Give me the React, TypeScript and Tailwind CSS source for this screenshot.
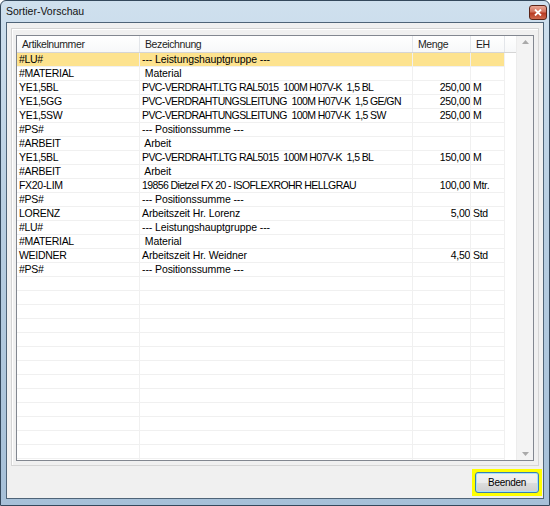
import React from "react";

type Row = { nr: string; bez: string; menge?: string; eh?: string; hl?: boolean; caps?: boolean };

const rows: Row[] = [
  { nr: "#LU#", bez: "--- Leistungshauptgruppe ---", hl: true },
  { nr: "#MATERIAL", bez: " Material" },
  { nr: "YE1,5BL", bez: "PVC-VERDRAHT.LTG RAL5015  100M H07V-K  1,5 BL", menge: "250,00", eh: "M", caps: true },
  { nr: "YE1,5GG", bez: "PVC-VERDRAHTUNGSLEITUNG  100M H07V-K  1,5 GE/GN", menge: "250,00", eh: "M", caps: true },
  { nr: "YE1,5SW", bez: "PVC-VERDRAHTUNGSLEITUNG  100M H07V-K  1,5 SW", menge: "250,00", eh: "M", caps: true },
  { nr: "#PS#", bez: "--- Positionssumme ---" },
  { nr: "#ARBEIT", bez: " Arbeit" },
  { nr: "YE1,5BL", bez: "PVC-VERDRAHT.LTG RAL5015  100M H07V-K  1,5 BL", menge: "150,00", eh: "M", caps: true },
  { nr: "#ARBEIT", bez: " Arbeit" },
  { nr: "FX20-LIM", bez: "19856 Dietzel FX 20 - ISOFLEXROHR HELLGRAU", menge: "100,00", eh: "Mtr.", caps: true },
  { nr: "#PS#", bez: "--- Positionssumme ---" },
  { nr: "LORENZ", bez: "Arbeitszeit Hr. Lorenz", menge: "5,00", eh: "Std" },
  { nr: "#LU#", bez: "--- Leistungshauptgruppe ---" },
  { nr: "#MATERIAL", bez: " Material" },
  { nr: "WEIDNER", bez: "Arbeitszeit Hr. Weidner", menge: "4,50", eh: "Std" },
  { nr: "#PS#", bez: "--- Positionssumme ---" },
];

const emptyRows = Array.from({ length: 14 }, () => ({ nr: "", bez: "" } as Row));

function ListRow({ r }: { r: Row }) {
  const bg = r.hl ? "bg-[#fde38f]" : "bg-white";
  return (
    <div className={`flex self-start h-[14px] shrink-0 ${bg}`}>
      <div className="w-[123px] shrink-0 border-r border-b border-[#f0f0f0] pl-[2px] leading-[13px] tracking-[-0.3px] whitespace-pre overflow-hidden">
        {r.nr}
      </div>
      <div
        className={`w-[273px] shrink-0 border-r border-b border-[#f0f0f0] pl-[2px] leading-[13px] whitespace-pre overflow-hidden ${
          r.caps ? "tracking-[-0.6px]" : "tracking-[-0.1px]"
        }`}
      >
        {r.bez}
      </div>
      <div className="w-[58px] shrink-0 border-r border-b border-[#f0f0f0] text-right leading-[13px] tracking-[-0.3px] whitespace-pre overflow-hidden">
        {r.menge}
      </div>
      <div className="w-[34px] shrink-0 border-r border-b border-[#f0f0f0] pl-[2px] leading-[13px] tracking-[-0.3px] whitespace-pre overflow-hidden">
        {r.eh}
      </div>
    </div>
  );
}

function HeaderCell({ w, children }: { w: string; children?: React.ReactNode }) {
  return (
    <div className={`${w} shrink-0 border-r border-[#e3e6ea] pl-[5px] leading-[16px] tracking-[-0.4px]`}>
      {children}
    </div>
  );
}

export default function App() {
  return (
    <div className="w-[550px] h-[506px] flex flex-col relative border border-[#34485c] rounded-t-[6px] bg-[linear-gradient(180deg,#cfe0ee_0%,#b9cfe2_40%,#a6c0d8_100%)] font-['Liberation_Sans',Arial,sans-serif] text-[10.5px] text-black overflow-hidden">
      {/* title bar */}
      <div className="h-[21px] shrink-0 flex items-center pl-[5px] text-[10.5px] text-[#111]">
        Sortier-Vorschau
      </div>
      <div className="absolute top-[4px] right-[2px] w-[18px] h-[15px] rounded-[3px] border border-[#5b2418] bg-[linear-gradient(180deg,#e9a796_0%,#d2735e_45%,#b83a22_55%,#cd6a4f_100%)] flex items-center justify-center">
        <svg width="8" height="7" viewBox="0 0 8 7">
          <path d="M1 0.5 L7 6.5 M7 0.5 L1 6.5" stroke="#fff" strokeWidth="1.8" />
        </svg>
      </div>

      {/* client area */}
      <div className="flex-1 mx-[5px] mb-[6px] border border-[#4f6478] bg-[#f0f0f0] flex flex-col px-[4px] pt-[5px]">
        <div className="border border-[#d5d5d5] shadow-[inset_1px_1px_0_#fff] pt-[6px] px-[4px] pb-[4px]">
          <div className="h-[426px] border border-[#828790] bg-white flex overflow-hidden">
            <div className="flex-1 flex flex-col overflow-hidden">
              <div className="h-[17px] shrink-0 flex border-b border-[#d5d5d5] bg-[linear-gradient(180deg,#ffffff,#f7f8f9)] text-[#1e1e1e]">
                <HeaderCell w="w-[123px]">Artikelnummer</HeaderCell>
                <HeaderCell w="w-[273px]">Bezeichnung</HeaderCell>
                <HeaderCell w="w-[58px]">Menge</HeaderCell>
                <HeaderCell w="w-[34px]">EH</HeaderCell>
              </div>
              {rows.map((r, i) => (
                <ListRow key={i} r={r} />
              ))}
              {emptyRows.map((r, i) => (
                <ListRow key={"e" + i} r={r} />
              ))}
            </div>
            {/* scrollbar */}
            <div className="w-[17px] shrink-0 bg-[#f3f3f3] border-l border-[#ececec] flex flex-col items-center justify-between py-[4px]">
              <svg width="7" height="4" viewBox="0 0 7 4">
                <path d="M0 4 L3.5 0 L7 4 Z" fill="#a9a9a9" />
              </svg>
              <svg width="7" height="4" viewBox="0 0 7 4">
                <path d="M0 0 L3.5 4 L7 0 Z" fill="#a9a9a9" />
              </svg>
            </div>
          </div>
        </div>

        {/* button row */}
        <div className="flex justify-end pt-[3px] -mr-[3px]">
          <div className="border-[3px] border-[#ffff00] bg-[#ffff00]">
            <button className="w-[64px] h-[21px] rounded-[3px] border border-[#3c7fb1] shadow-[inset_0_0_0_1px_#a8e2f8] bg-[linear-gradient(180deg,#f2f2f2_0%,#ebebeb_50%,#dddddd_51%,#cfcfcf_100%)] text-[10px] tracking-[-0.3px] text-black leading-[19px]">
              Beenden
            </button>
          </div>
        </div>
      </div>
    </div>
  );
}
